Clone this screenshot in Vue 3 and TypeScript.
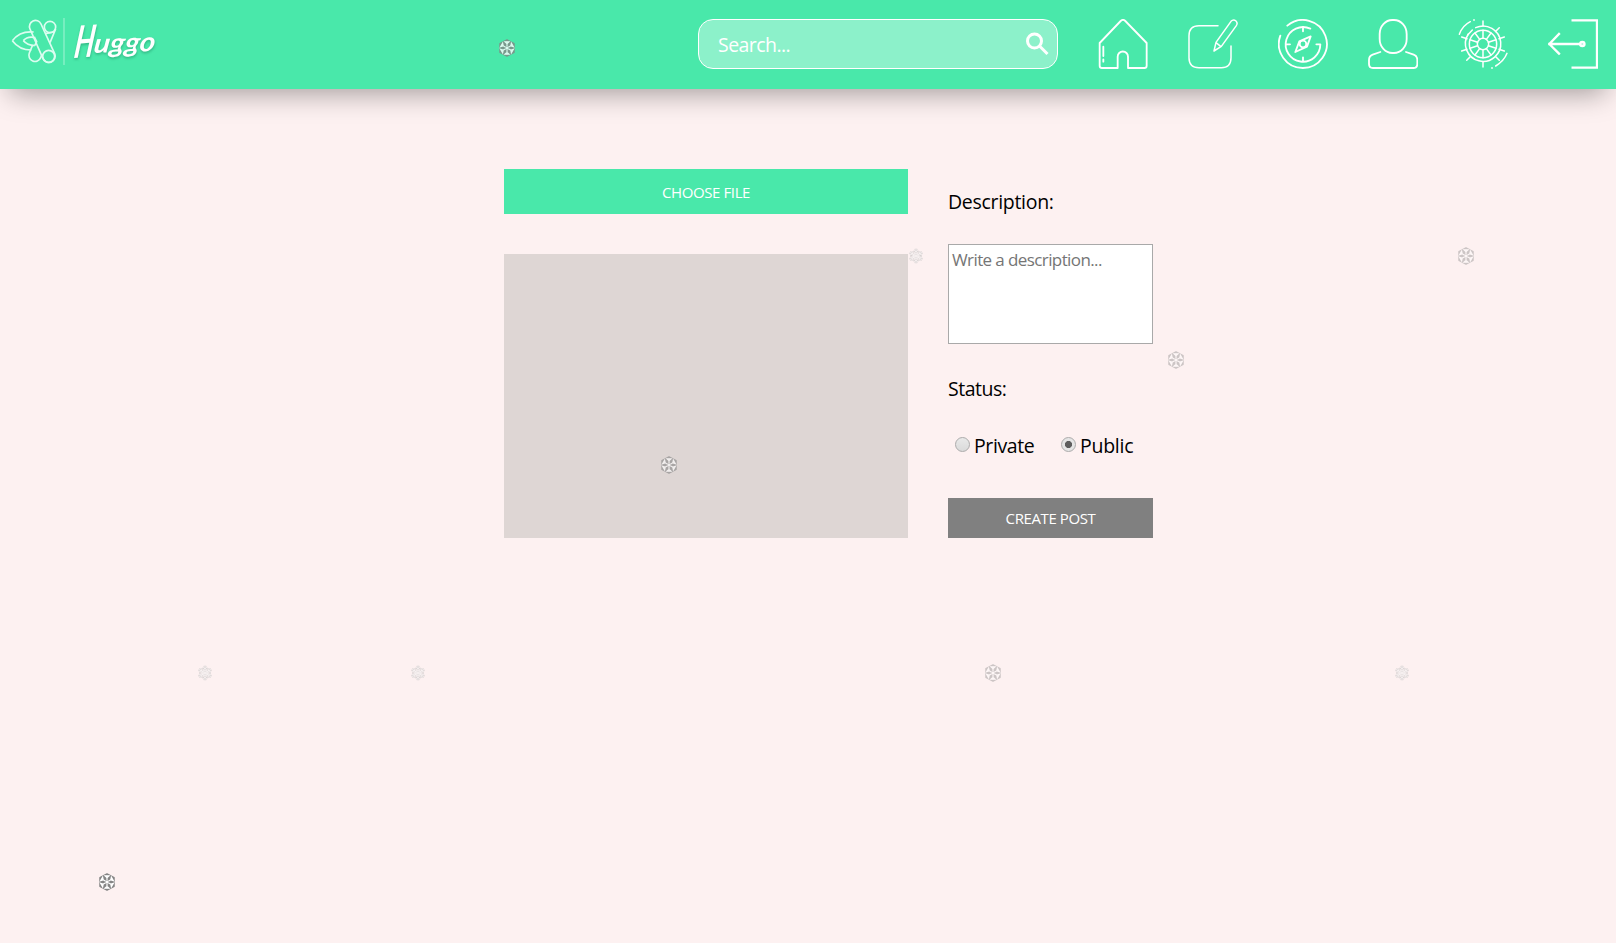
<script setup lang="ts">
import { ref } from 'vue'

interface Flake {
  x: number
  y: number
  kind: 'round' | 'spiky'
  opacity: number
}

const search = ref('')
const description = ref('')
const status = ref<'private' | 'public'>('public')

const flakes: Flake[] = [
  { x: 507, y: 48, kind: 'round', opacity: 0.8 },
  { x: 916, y: 256, kind: 'spiky', opacity: 0.5 },
  { x: 1466, y: 256, kind: 'round', opacity: 0.4 },
  { x: 1176, y: 360, kind: 'round', opacity: 0.4 },
  { x: 669, y: 465, kind: 'round', opacity: 0.6 },
  { x: 204.5, y: 673, kind: 'spiky', opacity: 0.5 },
  { x: 418, y: 673, kind: 'spiky', opacity: 0.5 },
  { x: 993, y: 673, kind: 'round', opacity: 0.4 },
  { x: 1402, y: 673, kind: 'spiky', opacity: 0.5 },
  { x: 107, y: 882, kind: 'round', opacity: 1 },
]

const points = [0, 60, 120, 180, 240, 300]
const spokes = Array.from({ length: 10 }, (_, i) => i * 36)
const handles = Array.from({ length: 8 }, (_, i) => i * 45).filter((a) => a !== 315 && a !== 90 && a !== 270)
</script>

<template>
  <div class="page">
    <header class="bar">
      <svg class="logo" viewBox="0 0 540 267" aria-label="Huggo">
        <g class="flower">
          <path d="M37 122Q60 92 101 96M37 122Q58 150 94 150M70 122Q83 107 106 113M70 122Q82 136 104 137M104 113L110 125L104 137" />
          <path d="M90 87A18 18 0 0 1 123 72L164 161A18 18 0 0 1 129 176L90 87" />
          <circle cx="150" cy="81" r="17" />
          <circle cx="146" cy="169" r="18" />
          <path d="M98 135L88 159A18 18 0 1 0 122 173L126 164M167 87L150 128M136 101L161 96" />
        </g>
        <path class="divider" d="M192 54V195" />
        <g class="word">
          <text class="cap" transform="translate(219 174) rotate(-4) skewX(-12)" textLength="60" lengthAdjust="spacingAndGlyphs">H</text>
          <text class="rest" transform="translate(279 159) rotate(-2) skewX(-10)" textLength="184" lengthAdjust="spacingAndGlyphs">uggo</text>
        </g>
      </svg>

      <nav class="nav">
        <label class="search">
          <input v-model="search" type="text" placeholder="Search..." />
          <svg class="lens" viewBox="0 0 24 24">
            <circle cx="9.500" cy="9" r="7" />
            <path d="M14.500 14L22.500 22" />
          </svg>
        </label>

        <svg class="icon" viewBox="39 27 150 150">
          <path d="M98 174H51Q44 174 44 167V99L107 33Q114 26 121 33L185 99V167Q185 174 178 174H129V140A15.500 15.500 0 0 0 98 140V174M55 110V138M55 148V155" />
        </svg>

        <svg class="icon thin" viewBox="309 27 150 150">
          <path d="M399 47H342Q312 47 312 77V143Q312 173 342 173H409Q438 173 438 143V108" />
          <path d="M387 123L393 97L438 34Q445 27 453 33Q459 39 454 47L409 109ZM393 98L407 109" />
        </svg>

        <svg class="icon" viewBox="39 27 150 150">
          <path d="M67 47A72 72 0 1 1 46 77" />
          <path d="M136 56A52 52 0 1 0 166 103H154" />
          <path d="M114 51V64M114 153V142M63 103H75" />
          <path d="M137 79L126 110L91 126L103 94Z" />
          <circle cx="114" cy="102" r="10" />
        </svg>

        <svg class="icon" viewBox="309 27 150 150">
          <rect x="344" y="30" width="81" height="99" rx="38" ry="42" />
          <path d="M346 126L323 134Q312 138 312 150V162Q312 174 324 174H445Q457 174 457 162V150Q457 138 446 134L423 126" />
        </svg>

        <svg class="icon thin" viewBox="39 27 150 150">
          <circle cx="114" cy="102" r="41" />
          <circle cx="114" cy="102" r="17" />
          <path d="M92 53A53 53 0 1 1 70 72" />
          <path d="M68 75L82 60" />
          <path v-for="a in spokes" :key="'s' + a" d="M114 85V61" :transform="`rotate(${a} 114 102)`" />
          <path v-for="a in handles" :key="'h' + a" d="M114 49V33" :transform="`rotate(${a} 114 102)`" />
          <path d="M43 73Q52 47 76 35M186 130Q177 153 152 168M86 30H88M140 174H142" />
          <path d="M50 81L66 86M178 81L162 86M50 123L66 118M178 123L162 118" />
        </svg>

        <svg class="icon exit" viewBox="309 27 150 150">
          <path d="M383 31H456V173H383M342 72L313 102L342 131M313 102H405" />
          <circle class="knob" cx="412" cy="102" r="6.500" />
        </svg>
      </nav>
    </header>

    <main class="composer">
      <section class="media">
        <button class="choose" type="button"><span>CHOOSE FILE</span></button>
        <div class="preview"></div>
      </section>
      <form class="details" @submit.prevent>
        <label class="caption" for="description">Description:</label>
        <textarea id="description" v-model="description" placeholder="Write a description..."></textarea>
        <p class="caption status">Status:</p>
        <div class="choices">
          <label><input v-model="status" type="radio" value="private" /><span>Private</span></label>
          <label><input v-model="status" type="radio" value="public" /><span>Public</span></label>
        </div>
        <button class="create" type="submit"><span>CREATE POST</span></button>
      </form>
    </main>

    <div class="snow" aria-hidden="true">
      <svg
        v-for="(f, i) in flakes"
        :key="i"
        class="flake"
        viewBox="-10 -10 20 20"
        :style="{ left: f.x + 'px', top: f.y + 'px', opacity: f.opacity }"
      >
        <template v-if="f.kind === 'round'">
          <path class="shade" d="M0 -8L7 -4.300V4.300L0 8L-7 4.300V-4.300Z" />
          <path
            v-for="a in points"
            :key="a"
            class="petal"
            d="M0 -1.500V-6.600M-2 -6.200L0 -4.400L2 -6.200Z"
            :transform="`rotate(${a})`"
          />
          <circle class="hub" r="1.500" />
        </template>
        <template v-else>
          <path
            v-for="a in points"
            :key="'d' + a"
            class="needle-shade"
            d="M0 0V-7.200M-2 -5.800L0 -4L2 -5.800"
            :transform="`rotate(${a})`"
          />
          <path
            v-for="a in points"
            :key="a"
            class="needle"
            d="M0 0V-7.200M-2 -5.800L0 -4L2 -5.800M-1.600 -3.200L0 -1.800L1.600 -3.200"
            :transform="`rotate(${a})`"
          />
        </template>
      </svg>
    </div>
  </div>
</template>

<style>
body {
  background: #fdf1f1;
}
</style>

<style scoped>
.page {
  position: relative;
  height: 943px;
  overflow: hidden;
  background: #fdf1f1;
  color: #000;
  font-family: 'Open Sans', 'Noto Sans', sans-serif;
  font-size: 20px;
}

.page * {
  box-sizing: border-box;
}

.bar {
  display: flex;
  justify-content: space-between;
  height: 89px;
  padding-right: 18px;
  background: #49e8aa;
  box-shadow: 0 14px 28px -10px rgba(0, 0, 0, 0.37);
}

.logo {
  width: 180px;
  height: 89px;
}

.flower {
  fill: none;
  stroke: #dcfdf0;
  stroke-width: 5;
  stroke-linejoin: round;
}

.divider {
  stroke: #8ff2cb;
  stroke-width: 4;
}

.word {
  fill: #fff;
  font-family: Lato, sans-serif;
  font-style: italic;
  font-weight: 700;
  filter: drop-shadow(1px 5px 3px rgba(0, 80, 50, 0.3));
}

.cap {
  font-size: 132px;
}

.rest {
  font-size: 80px;
}

.nav {
  display: flex;
  gap: 40px;
  padding-top: 19px;
}

.search {
  display: flex;
  align-items: center;
  width: 360px;
  height: 50px;
  padding: 0 8px 0 19px;
  border: 1px solid #fff;
  border-radius: 15px;
  background: #8cf1ca;
}

.search input {
  flex: 1;
  min-width: 0;
  padding: 1px 0 0;
  border: 0;
  outline: 0;
  background: transparent;
  color: #fff;
  font: inherit;
  font-size: 19.500px;
  letter-spacing: -0.55px;
}

.search input::placeholder {
  color: #fff;
}

.lens {
  width: 24px;
  height: 24px;
  fill: none;
  stroke: #fff;
  stroke-width: 3;
}

.icon {
  width: 50px;
  height: 50px;
  fill: none;
  stroke: #fff;
  stroke-width: 5.500;
  stroke-linejoin: round;
  stroke-linecap: round;
}

.thin {
  stroke-width: 4.500;
}

.exit {
  stroke-width: 7;
  stroke-linecap: square;
  stroke-linejoin: miter;
}

.knob {
  fill: #b8f6df;
}

.composer {
  display: flex;
  gap: 40px;
  width: 649px;
  margin: 80px 0 0 504px;
}

.media {
  display: flex;
  flex-direction: column;
  gap: 40px;
  width: 404px;
}

button {
  padding: 0;
  border: 0;
  color: #fff;
  font-family: inherit;
  font-size: 15px;
  letter-spacing: -0.4px;
}

.choose {
  height: 45px;
  background: #49e8aa;
}

.preview {
  height: 284px;
  background: #ded6d4;
}

.details {
  display: flex;
  flex-direction: column;
  width: 205px;
}

.caption {
  height: 27px;
  margin: 19px 0 29px;
  font-size: 19.500px;
  line-height: 27px;
  letter-spacing: -0.3px;
}

textarea {
  width: 205px;
  height: 100px;
  padding: 3px;
  border: 1px solid #a9a9a9;
  outline: 0;
  resize: none;
  background: #fff;
  font: 17px/23px 'Open Sans', 'Noto Sans', sans-serif;
  letter-spacing: -0.6px;
}

textarea::placeholder {
  color: #757575;
}

.status {
  margin: 31px 0 30px;
  letter-spacing: -0.5px;
}

.choices {
  display: flex;
  height: 28px;
  font-size: 19.500px;
  letter-spacing: -0.4px;
  line-height: 28px;
}

.choices label {
  display: flex;
  width: 106px;
  padding-left: 7px;
}

.choices label:last-child {
  width: 99px;
  letter-spacing: -0.25px;
}

.choices input {
  appearance: none;
  flex: none;
  width: 15px;
  height: 15px;
  margin: 5px 4px 0 0;
  border: 1px solid #ababab;
  border-radius: 50%;
  background: linear-gradient(#e9e9e9, #dadada);
}

.choices input:checked {
  background: radial-gradient(circle, #5e5e5e 3.200px, #e5e5e5 3.900px);
}

.create {
  height: 40px;
  margin-top: auto;
  background: #808080;
}

.snow {
  position: absolute;
  inset: 0;
  pointer-events: none;
}

.flake {
  position: absolute;
  width: 20px;
  height: 20px;
  transform: translate(-50%, -50%);
}

.shade {
  fill: #858585;
  stroke: #858585;
  stroke-width: 1.500;
  stroke-linejoin: round;
}

.petal {
  fill: #fff;
  stroke: #fff;
  stroke-width: 1.200;
}

.hub {
  fill: #fff;
}

.needle-shade {
  fill: none;
  stroke: #b5b5b5;
  stroke-width: 2.600;
}

.needle {
  fill: none;
  stroke: #f2f2f2;
  stroke-width: 0.900;
}
</style>
